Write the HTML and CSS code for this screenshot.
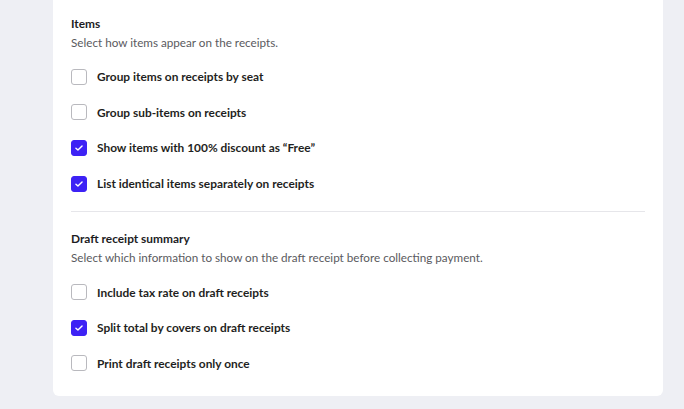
FILE: index.html
```html
<!DOCTYPE html>
<html>
<head>
    <title>Receipt settings</title>
    <link rel="stylesheet" href="styles.css">
</head>
<body>
    <div class="settings-card">
        <!-- Items -->
        <div class="section">
            <h3 class="section-title">Items</h3>
            <p class="section-desc">Select how items appear on the receipts.</p>
            <ul class="option-list">
                <li class="option"><span class="check"></span>Group items on receipts by seat</li>
                <li class="option"><span class="check"></span>Group sub-items on receipts</li>
                <li class="option"><span class="check checked"><svg viewBox="0 0 16 16"><path d="M4.5 8.2l2.3 2.2 4.7-4.8"/></svg></span>Show items with 100% discount as “Free”</li>
                <li class="option"><span class="check checked"><svg viewBox="0 0 16 16"><path d="M4.5 8.2l2.3 2.2 4.7-4.8"/></svg></span>List identical items separately on receipts</li>
            </ul>
        </div>

        <hr class="divider">

        <!-- Draft receipt summary -->
        <div class="section">
            <h3 class="section-title">Draft receipt summary</h3>
            <p class="section-desc">Select which information to show on the draft receipt before collecting payment.</p>
            <ul class="option-list">
                <li class="option"><span class="check"></span>Include tax rate on draft receipts</li>
                <li class="option"><span class="check checked"><svg viewBox="0 0 16 16"><path d="M4.5 8.2l2.3 2.2 4.7-4.8"/></svg></span>Split total by covers on draft receipts</li>
                <li class="option"><span class="check"></span>Print draft receipts only once</li>
            </ul>
        </div>
    </div>
</body>
</html>
```

FILE: styles.css
```css
body {
    font-family: Lato, "Liberation Sans", sans-serif;
    background-color: #eeeff4;
    margin: 0;
    color: #1d1d1f;
}
.settings-card {
    background: #fff;
    margin-left: 53px;
    width: 574px;
    padding: 15px 18px 15px 18px;
    border-radius: 0 0 6px 6px;
}
.section-title {
    font-size: 11.9px;
    font-weight: bold;
    line-height: 18px;
    margin: 0;
}
.section-desc {
    font-size: 11.7px;
    line-height: 18px;
    color: #5a5a5e;
    margin: 0;
}
.option-list {
    list-style: none;
    margin: 8px 0 0 0;
    padding: 0;
}
.option {
    display: flex;
    align-items: center;
    height: 35.6px;
    font-size: 11.9px;
    font-weight: bold;
    color: #1f1f22;
}
.check {
    width: 14px;
    height: 14px;
    border: 1px solid #b9b9be;
    border-radius: 3px;
    margin-right: 10px;
    display: flex;
    align-items: center;
    justify-content: center;
}
.check.checked {
    background-color: #3d22f5;
    border-color: #3d22f5;
}
.check svg {
    width: 14px;
    height: 14px;
    fill: none;
    stroke: #fff;
    stroke-width: 1.6;
    stroke-linecap: round;
    stroke-linejoin: round;
}
.divider {
    border: none;
    border-top: 1px solid #e6e6ea;
    margin: 10px 0 18px 0;
}
```
